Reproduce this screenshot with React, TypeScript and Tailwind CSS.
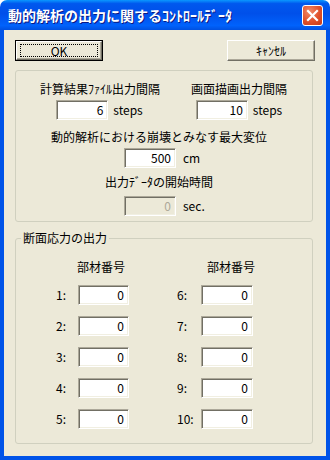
import React from 'react'

const font = "font-['Noto_Sans_CJK_JP','Noto_Sans',sans-serif]"

function Edit({ value, disabled = false, width = 'w-[52px]' }: { value: string; disabled?: boolean; width?: string }) {
  return (
    <div
      className={`${width} h-[20px] flex items-center justify-end pr-[4px] text-[12px] leading-[14px] border border-t-[#ACA899] border-l-[#ACA899] border-b-white border-r-white shadow-[inset_1px_1px_0_#716F64,inset_-1px_-1px_0_#F1EFE2] ${
        disabled ? 'bg-[#ECE9D8] text-[#ACA899]' : 'bg-white text-black'
      }`}
    >
      {value}
    </div>
  )
}

function Button({ label, isDefault = false }: { label: string; isDefault?: boolean }) {
  return (
    <div
      className={`w-[88px] h-[21px] bg-[#ECE9D8] ${
        isDefault ? 'border border-black p-0' : 'border border-t-white border-l-white border-b-[#716F64] border-r-[#716F64]'
      }`}
    >
      <div
        className={`h-full w-full flex items-center justify-center text-[12px] leading-[14px] text-black ${
          isDefault
            ? 'border border-t-white border-l-white border-b-[#716F64] border-r-[#716F64] shadow-[inset_-1px_-1px_0_#ACA899]'
            : 'shadow-[inset_-1px_-1px_0_#ACA899]'
        }`}
      >
        {isDefault ? (
          <div className="w-[78px] h-[13px] border border-dotted border-black flex items-center justify-center">
            {label}
          </div>
        ) : (
          label
        )}
      </div>
    </div>
  )
}

function MemberRow({ a, b }: { a: number; b: number }) {
  return (
    <div className="flex items-center h-[20px]">
      <span className="ml-[40px] w-[22px]">{a}:</span>
      <Edit value="0" width="w-[51px]" />
      <span className="ml-[48px] w-[24px]">{b}:</span>
      <Edit value="0" />
    </div>
  )
}

export default function App() {
  return (
    <div className={`w-[330px] h-[460px] bg-white flex flex-col ${font} text-[12px] leading-[14px] text-black`}>
      {/* Title bar */}
      <div className="h-[30px] shrink-0 rounded-t-[7px] flex items-center justify-between pl-[8px] pr-[7px] bg-[linear-gradient(to_bottom,#0A97FF_0%,#0058EE_12%,#0050EA_45%,#0062FC_85%,#0050E0_100%)]">
        <span className="text-white font-bold text-[14px] leading-[16px] [text-shadow:1px_1px_0_#0A1883]">
          動的解析の出力に関するｺﾝﾄﾛｰﾙﾃﾞｰﾀ
        </span>
        <div className="w-[21px] h-[21px] rounded-[3px] border border-white flex items-center justify-center bg-[radial-gradient(circle_at_35%_30%,#F08B6A,#E0502A_55%,#C43A18)]">
          <svg width="13" height="13" viewBox="0 0 13 13">
            <path d="M2 2 L11 11 M11 2 L2 11" stroke="white" strokeWidth="2.2" strokeLinecap="square" />
          </svg>
        </div>
      </div>

      {/* Client */}
      <div className="flex-1 flex flex-col bg-[#ECE9D8] border-x-[4px] border-b-[4px] border-[#0053E8]">
        {/* Buttons */}
        <div className="flex justify-between pl-[11px] pr-[11px] pt-[10px]">
          <Button label="OK" isDefault />
          <Button label="ｷｬﾝｾﾙ" />
        </div>

        {/* Group 1 */}
        <div className="ml-[11px] mr-[13px] mt-[9px] h-[152px] border border-[#D0D0BF] rounded-[3px] pt-[11px] flex flex-col">
          <div className="flex">
            <div className="w-[166px] flex flex-col items-center">
              <span className="pl-[2px]">計算結果ﾌｧｲﾙ出力間隔</span>
              <div className="flex items-center mt-[4px] pl-[1px]">
                <Edit value="6" />
                <span className="ml-[5px]">steps</span>
              </div>
            </div>
            <div className="w-[114px] flex flex-col items-center">
              <span>画面描画出力間隔</span>
              <div className="flex items-center mt-[4px]">
                <Edit value="10" />
                <span className="ml-[5px]">steps</span>
              </div>
            </div>
          </div>

          <div className="flex flex-col items-center pr-[10px] mt-[10px]">
            <span>動的解析における崩壊とみなす最大変位</span>
          </div>
          <div className="flex items-center ml-[108px] mt-[4px]">
            <Edit value="500" />
            <span className="ml-[7px]">cm</span>
          </div>
          <div className="flex flex-col items-center pr-[10px] mt-[7px]">
            <span>出力ﾃﾞｰﾀの開始時間</span>
          </div>
          <div className="flex items-center ml-[108px] mt-[7px]">
            <Edit value="0" disabled />
            <span className="ml-[7px]">sec.</span>
          </div>
        </div>

        {/* Group 2 */}
        <fieldset className="ml-[11px] mr-[13px] mt-[8px] border border-[#D0D0BF] rounded-[3px] pb-[14px]">
          <legend className="ml-[5px] px-[2px] leading-[16px]">断面応力の出力</legend>
          <div className="flex mt-[14px]">
            <span className="ml-[61px]">部材番号</span>
            <span className="ml-[82px]">部材番号</span>
          </div>
          <div className="flex flex-col gap-[11px] mt-[11px]">
            <MemberRow a={1} b={6} />
            <MemberRow a={2} b={7} />
            <MemberRow a={3} b={8} />
            <MemberRow a={4} b={9} />
            <MemberRow a={5} b={10} />
          </div>
        </fieldset>
      </div>
    </div>
  )
}
